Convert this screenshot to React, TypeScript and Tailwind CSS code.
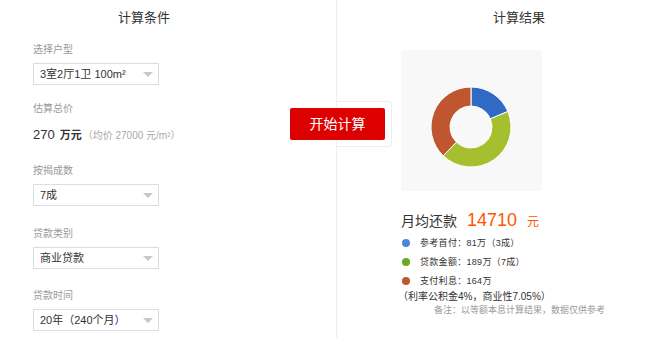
import React from 'react';

const font = { fontFamily: '"Liberation Sans", "Noto Sans CJK SC", sans-serif' };

// donut segments: share of total
const segments = [
  { label: '参考首付：81万（3成）', value: 81, color: '#2f6bc4', dot: '#4a87d6' },
  { label: '贷款金额：189万（7成）', value: 189, color: '#a6bf2e', dot: '#6aaa1e' },
  { label: '支付利息：164万', value: 164, color: '#c0562f', dot: '#c0562f' },
];

const Donut: React.FC = () => {
  const total = segments.reduce((s, x) => s + x.value, 0);
  const cx = 41;
  const cy = 41;
  const r = 40;
  const ri = 21;
  let start = 0;
  const pt = (a: number, rad: number) => {
    const t = (a - 90) * (Math.PI / 180);
    return [cx + rad * Math.cos(t), cy + rad * Math.sin(t)];
  };
  return (
    <svg width="82" height="82" viewBox="0 0 82 82">
      {segments.map((s) => {
        const end = start + (s.value / total) * 360;
        const large = end - start > 180 ? 1 : 0;
        const [x1, y1] = pt(start, r);
        const [x2, y2] = pt(end, r);
        const [x3, y3] = pt(end, ri);
        const [x4, y4] = pt(start, ri);
        const d = `M${x1},${y1} A${r},${r} 0 ${large} 1 ${x2},${y2} L${x3},${y3} A${ri},${ri} 0 ${large} 0 ${x4},${y4} Z`;
        start = end;
        return <path key={s.label} d={d} fill={s.color} stroke="#ffffff" strokeWidth="1" />;
      })}
    </svg>
  );
};

const Select: React.FC<{ value: string }> = ({ value }) => (
  <div className="flex h-[22px] w-[126px] items-center justify-between border border-[#dddddd] bg-white pl-[6px] pr-[5px]">
    <span className="text-[11px] text-[#333333]">{value}</span>
    <span className="mt-[1px] h-0 w-0 border-x-[5px] border-t-[5px] border-x-transparent border-t-[#c8c8c8]" />
  </div>
);

const Label: React.FC<{ text: string }> = ({ text }) => (
  <div className="text-[10px] leading-[12px] text-[#999999]">{text}</div>
);

export default function App() {
  return (
    <div className="relative flex h-[358px] w-[650px] bg-white" style={font}>
      {/* left: inputs */}
      <div className="flex h-[338px] w-[337px] flex-col border-r border-[#eeeeee] pl-[33px]">
        <div className="mt-[9px] pl-[85px] text-[13px] leading-[18px] text-[#333333]">计算条件</div>
        <div className="mt-[17px]"><Label text="选择户型" /></div>
        <div className="mt-[7px]"><Select value="3室2厅1卫 100m²" /></div>
        <div className="mt-[18px]"><Label text="估算总价" /></div>
        <div className="mt-[12px] flex items-baseline leading-[16px]">
          <span className="text-[13px] text-[#333333]">270</span>
          <span className="ml-[5px] text-[11px] font-bold text-[#333333]">万元</span>
          <span className="ml-[1px] text-[10px] text-[#aaaaaa]">（均价 27000 元/m²）</span>
        </div>
        <div className="mt-[21px]"><Label text="按揭成数" /></div>
        <div className="mt-[7px]"><Select value="7成" /></div>
        <div className="mt-[22px]"><Label text="贷款类别" /></div>
        <div className="mt-[7px]"><Select value="商业贷款" /></div>
        <div className="mt-[21px]"><Label text="贷款时间" /></div>
        <div className="mt-[7px]"><Select value="20年（240个月）" /></div>
      </div>

      {/* start button box overlapping divider */}
      <div className="absolute left-[337px] top-[101px] h-[46px] w-[55px] rounded-r-[3px] border border-l-0 border-[#eeeeee] bg-white" />
      <button className="absolute left-[290px] top-[108px] flex h-[32px] w-[95px] items-center justify-center rounded-[2px] bg-[#dd0000] text-[14px] text-white">
        开始计算
      </button>

      {/* right: results */}
      <div className="flex flex-1 flex-col pl-[64px]">
        <div className="mt-[9px] pl-[92px] text-[13px] leading-[18px] text-[#333333]">计算结果</div>
        <div className="mt-[23px] flex h-[141px] w-[141px] items-center justify-center rounded-[3px] bg-[#f8f8f8]">
          <div className="-ml-[1px] mt-[13px]">
            <Donut />
          </div>
        </div>
        <div className="mt-[19px] flex items-baseline leading-[20px]">
          <span className="text-[14px] text-[#333333]">月均还款</span>
          <span className="ml-[10px] text-[18px] text-[#ff5500]">14710</span>
          <span className="ml-[10px] text-[12px] text-[#ff5500]">元</span>
        </div>
        <div className="mt-[5px] flex flex-col gap-[7px] pl-[1px]">
          {segments.map((s) => (
            <div key={s.label} className="flex items-center leading-[12px]">
              <span className="h-[8px] w-[8px] rounded-full" style={{ backgroundColor: s.dot }} />
              <span className="ml-[10px] text-[9px] tracking-[0.3px] text-[#333333]">{s.label}</span>
            </div>
          ))}
        </div>
        <div className="-ml-[3px] mt-[4px] text-[10px] leading-[12px] text-[#333333]">（利率公积金4%，商业性7.05%）</div>
        <div className="mt-[1px] pl-[33px] text-[9px] leading-[12px] text-[#999999]">备注：以等额本息计算结果，数据仅供参考</div>
      </div>
    </div>
  );
}
